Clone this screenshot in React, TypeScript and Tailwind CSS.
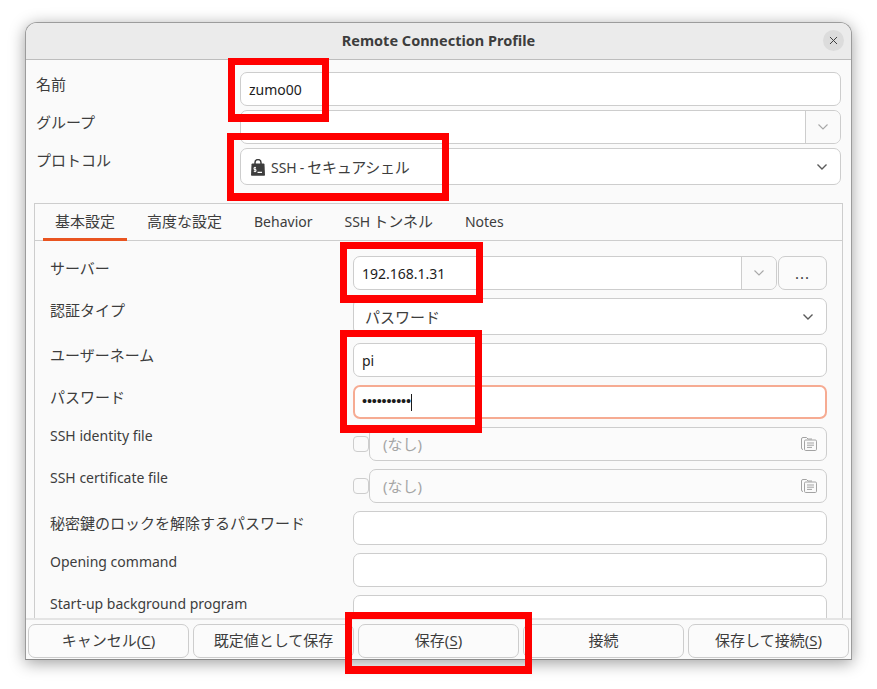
import React from 'react';
import { X } from 'lucide-react';

const Chevron = ({ light = false }: { light?: boolean }) => (
  <svg width="12" height="8" viewBox="0 0 12 8" fill="none" className={light ? 'text-[#a8a8a8]' : 'text-[#5a5a5a]'}>
    <path d="M1.5 1.5 L6 6 L10.5 1.5" stroke="currentColor" strokeWidth={light ? 1.1 : 1.4} />
  </svg>
);

const SecureShellIcon = () => (
  <svg width="14" height="17" viewBox="0 0 14 17" className="shrink-0">
    <path d="M4 5 V3.6 A3 3 0 0 1 10 3.6 V5" fill="none" stroke="#3d3d3d" strokeWidth="1.5" />
    <path d="M1.5 4.6 H12.5 Q13.4 4.6 13.5 5.5 L14 16 Q14 16.8 13.2 16.8 H0.8 Q0 16.8 0 16 L0.5 5.5 Q0.6 4.6 1.5 4.6 Z" fill="#3d3d3d" />
    <path d="M5 8.6 H3 V10.5 H5 V12.4 H2.8 M4 7.8 V13.2" fill="none" stroke="#fff" strokeWidth="0.9" />
    <path d="M6.5 13.3 H11" stroke="#fff" strokeWidth="1.2" />
  </svg>
);

const FileIcon = () => (
  <svg width="16" height="14" viewBox="0 0 16 14" fill="none" stroke="#a3a3a3" strokeWidth="1">
    <path d="M2 12.5 Q0.5 12.5 0.5 11 V2 Q0.5 0.5 2 0.5 H5.5 L7 2 H11" />
    <rect x="3.5" y="3" width="12" height="10.5" rx="1.2" fill="#fafafa" />
    <path d="M6 6 H13 M6 8.2 H13 M6 10.4 H11" />
  </svg>
);

const boxBase = 'border border-[#cdcdcd] rounded-[7px] flex items-center';

// latin runs sit a bit smaller than the japanese ones
const Lat = ({ children }: { children: React.ReactNode }) => <span className="text-[14px]">{children}</span>;

const Entry = ({ children, className = '' }: { children?: React.ReactNode; className?: string }) => (
  <div className={`${boxBase} bg-white h-[34px] px-[8px] text-[#1c1c1c] ${className}`}>{children}</div>
);

const Select = ({ children }: { children: React.ReactNode }) => (
  <div className={`${boxBase} bg-white h-[37px] px-[10px] justify-between text-[#3d3d3d]`}>
    <div className="flex items-center pt-[1px]">{children}</div>
    <span className="mr-[2px] flex"><Chevron /></span>
  </div>
);

const FileChooser = () => (
  <div className="flex h-[34px] items-center">
    <div className="w-[16px] h-[16px] border border-[#cdcdcd] rounded-[4px] bg-[#fafafa] shrink-0" />
    <div className={`${boxBase} bg-[#fbfbfb] h-[34px] flex-1 pl-[13px] pr-[9px] justify-between text-[#a5a5a5]`}>
      <span>(なし)</span>
      <FileIcon />
    </div>
  </div>
);

const Row = ({ label, latin = false, children }: { label: string; latin?: boolean; children: React.ReactNode }) => (
  <div className="flex items-start">
    <div className={`w-[303px] shrink-0 text-[#3d3d3d] ${latin ? 'text-[14px] leading-[18px]' : 'leading-[20px] pt-[2px]'}`}>{label}</div>
    <div className="flex-1">{children}</div>
  </div>
);

const RedBox = ({ className }: { className: string }) => (
  <div className={`absolute border-[#ff0000] border-[7px] border-b-[8px] ${className}`} />
);

const FooterButton = ({ label, mnemonic }: { label: string; mnemonic?: string }) => (
  <div className="flex-1 h-[34px] border border-[#cdcdcd] rounded-[7px] bg-[#fbfbfb] flex items-center justify-center pb-[1px] text-[#3d3d3d]">
    {label}
    {mnemonic && (
      <span>
        (<span className="underline underline-offset-2">{mnemonic}</span>)
      </span>
    )}
  </div>
);

const tabs: React.ReactNode[] = [
  '高度な設定',
  <Lat>Behavior</Lat>,
  <span className="flex items-center"><Lat>SSH</Lat><span className="ml-[3px]">トンネル</span></span>,
  <Lat>Notes</Lat>,
];

export default function App() {
  return (
    <div className="relative w-[877px] h-[689px] bg-white pl-[25px] pt-[22px] overflow-hidden text-[15px] font-['Noto_Sans','Noto_Sans_CJK_JP',sans-serif]">
      <div className="w-[827px] h-[638px] rounded-t-[12px] border border-[#9c9c9c] border-b-[#8a8a8a] bg-[#fafafa] shadow-[0_3px_16px_rgba(0,0,0,0.38)] flex flex-col overflow-hidden">
        {/* title bar */}
        <div className="relative h-[37px] bg-[#ebebeb] border-b border-[#bdbdbd] shrink-0 flex items-center justify-center">
          <span className="font-bold text-[14.5px] text-[#3d3d3d]">Remote Connection Profile</span>
          <div className="absolute right-[7px] top-[7px] w-[21px] h-[21px] rounded-full bg-[#dcdcdc] flex items-center justify-center">
            <X size={13} strokeWidth={1.8} className="text-[#3d3d3d]" />
          </div>
        </div>

        {/* profile fields */}
        <div className="pt-[12px] pl-[10px] pr-[10px] shrink-0 flex flex-col gap-[4px]">
          <div className="flex items-start">
            <div className="w-[204px] shrink-0 pt-[2px] text-[#3d3d3d] leading-[20px]">名前</div>
            <Entry className="flex-1"><Lat>zumo00</Lat></Entry>
          </div>
          <div className="flex items-start">
            <div className="w-[204px] shrink-0 pt-[2px] text-[#3d3d3d] leading-[20px]">グループ</div>
            <div className={`${boxBase} flex-1 bg-white h-[34px] justify-end`}>
              <div className="w-[35px] h-full border-l border-[#cdcdcd] bg-[#fafafa] rounded-r-[7px] flex items-center justify-center">
                <Chevron light />
              </div>
            </div>
          </div>
          <div className="flex items-start">
            <div className="w-[204px] shrink-0 pt-[2px] text-[#3d3d3d] leading-[20px]">プロトコル</div>
            <div className="flex-1">
              <Select>
                <SecureShellIcon />
                <span className="ml-[6px] flex items-center">
                  <Lat>SSH</Lat>
                  <span className="mx-[3px] text-[14px]">-</span>
                  <span className="tracking-[-0.25px]">セキュアシェル</span>
                </span>
              </Select>
            </div>
          </div>
        </div>

        {/* notebook */}
        <div className="mt-[18px] ml-[8px] mr-[8px] flex-1 min-h-0 border-x border-t border-[#cdcdcd] flex flex-col">
          <div className="h-[37px] shrink-0 border-b border-[#cdcdcd] flex items-stretch pl-[8px] text-[#3d3d3d]">
            <div className="w-[84px] mr-[4px] border-b-[3px] border-[#e95420] h-[37px] flex items-center justify-center">基本設定</div>
            {tabs.map((tab, index) => (
              <div key={index} className="px-[16px] h-[35px] flex items-center">{tab}</div>
            ))}
          </div>
          <div className="flex-1 min-h-0 overflow-hidden pt-[15px] pl-[15px] pr-[15px] flex flex-col gap-[8px]">
            <Row label="サーバー">
              <div className="flex">
                <div className={`${boxBase} flex-1 bg-white h-[34px] pl-[8px] text-[#1c1c1c] justify-between`}>
                  <Lat>192.168.1.31</Lat>
                  <div className="w-[35px] h-full border-l border-[#cdcdcd] bg-[#fafafa] rounded-r-[7px] flex items-center justify-center">
                    <Chevron light />
                  </div>
                </div>
                <div className={`${boxBase} w-[49px] ml-[1px] h-[34px] bg-[#fbfbfb] justify-center tracking-[1px] text-[#3d3d3d]`}>...</div>
              </div>
            </Row>
            <Row label="認証タイプ">
              <Select>
                <span className="ml-[1px]">パスワード</span>
              </Select>
            </Row>
            <Row label="ユーザーネーム">
              <Entry><Lat>pi</Lat></Entry>
            </Row>
            <Row label="パスワード">
              <div className="h-[34px] border-2 border-[#f6ab92] rounded-[7px] bg-white flex items-center pl-[7px] text-[#1c1c1c]">
                <span className="text-[14.5px] tracking-[-0.2px] font-['Liberation_Sans',sans-serif]">••••••••••</span>
                <span className="w-px h-[17px] bg-[#1c1c1c]" />
              </div>
            </Row>
            <Row label="SSH identity file" latin>
              <FileChooser />
            </Row>
            <Row label="SSH certificate file" latin>
              <FileChooser />
            </Row>
            <Row label="秘密鍵のロックを解除するパスワード">
              <Entry />
            </Row>
            <Row label="Opening command" latin>
              <Entry />
            </Row>
            <Row label="Start-up background program" latin>
              <Entry />
            </Row>
          </div>
        </div>

        {/* action buttons */}
        <div className="h-[41px] shrink-0 border-t-2 border-[#e4e4e4] pt-[4px] px-[2px] flex gap-[4px]">
          <FooterButton label="キャンセル" mnemonic="C" />
          <FooterButton label="既定値として保存" />
          <FooterButton label="保存" mnemonic="S" />
          <FooterButton label="接続" />
          <FooterButton label="保存して接続" mnemonic="S" />
        </div>
      </div>

      {/* annotation rectangles */}
      <RedBox className="left-[228px] top-[58px] w-[101px] h-[64px]" />
      <RedBox className="left-[227px] top-[133px] w-[222px] h-[68px]" />
      <RedBox className="left-[340px] top-[242px] w-[143px] h-[61px]" />
      <RedBox className="left-[340px] top-[330px] w-[142px] h-[103px]" />
      <RedBox className="left-[345px] top-[612px] w-[187px] h-[62px]" />
    </div>
  );
}
